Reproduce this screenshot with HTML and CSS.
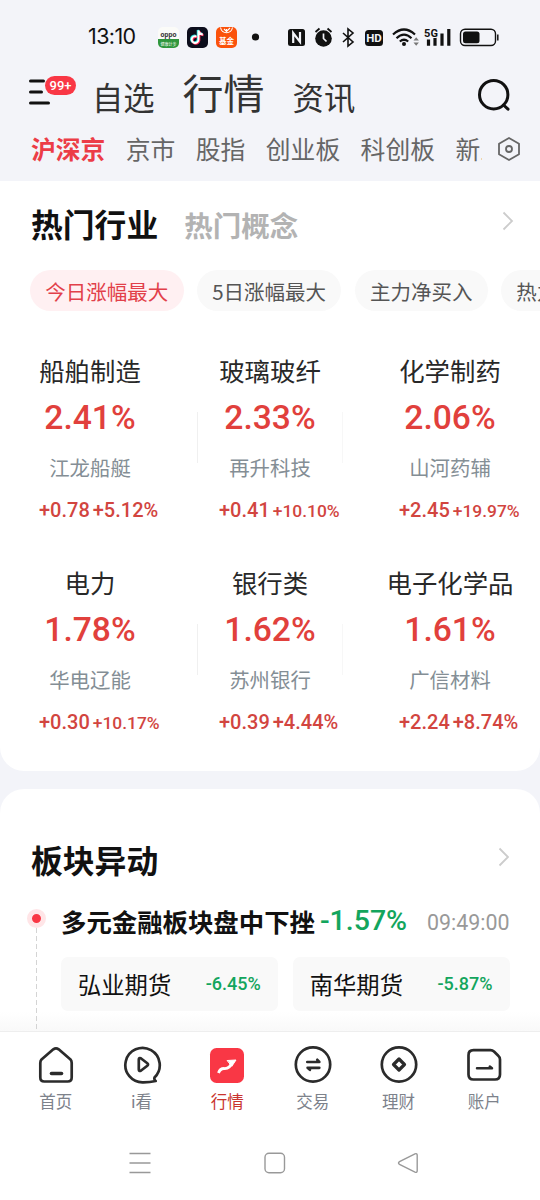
FILE: index.html
```html
<!DOCTYPE html>
<html lang="zh-CN">
  <head>
    <meta charset="UTF-8" />
    <meta name="viewport" content="width=device-width, initial-scale=1.0" />
    <title>行情</title>
    <link rel="stylesheet" href="styles.css">
  </head>
  <body>
    <div class="phone">
      <div class="status">
        <span class="clock">13:10</span>
        <svg class="status-apps" width="110" height="24" viewBox="0 0 110 24">
          <rect x="2" y="2" width="21" height="21" rx="5" fill="#fbfbf8" />
          <path d="M2 14h21v4a5 5 0 0 1-5 5H7a5 5 0 0 1-5-5z" fill="#2f963d" />
          <text x="12.5" y="12" class="t-oppo">oppo</text>
          <text x="12.5" y="20.5" class="t-tiny">健康计步</text>
          <rect x="31" y="2" width="21" height="21" rx="5" fill="#0c0d1c" />
          <g fill="none" stroke-width="2.3">
            <path d="M40.5 11.5a3.4 3.4 0 1 0 2 3.3V5.5c.4 2.4 1.9 3.7 4.3 4" stroke="#25e5e0" transform="translate(-.6 -.5)" />
            <path d="M40.5 11.5a3.4 3.4 0 1 0 2 3.3V5.5c.4 2.4 1.9 3.7 4.3 4" stroke="#fe2c55" transform="translate(.7 .6)" />
            <path d="M40.5 11.5a3.4 3.4 0 1 0 2 3.3V5.5c.4 2.4 1.9 3.7 4.3 4" stroke="#fff" stroke-width="1.9" />
          </g>
          <rect x="60" y="2" width="21" height="21" rx="5" fill="#fb520b" />
          <path d="M64.5 2.5c1.5 7 10.5 7 12 0M68 4l2.5 2.5L74 3M70.5 6.5V4" fill="none" stroke="#fff" stroke-width="1.1" />
          <text x="70.5" y="18.5" class="t-fund">基金</text>
          <circle cx="99.5" cy="12" r="3.6" fill="#111" />
        </svg>
        <svg class="status-sys" width="214" height="24" viewBox="0 0 214 24">
          <rect x="2" y="4" width="17" height="17" rx="2.5" fill="#111" />
          <path d="M7.2 18V8l6.800 8.800V7" fill="none" stroke="#f3f4f9" stroke-width="2.2" />
          <circle cx="37.5" cy="13.5" r="8.3" fill="#111" />
          <path d="M29.5 7l4-3.500M45.5 7l-4-3.500" stroke="#111" stroke-width="1.8" />
          <path d="M37.5 8.500v5l3 3" fill="none" stroke="#f3f4f9" stroke-width="1.7" />
          <path d="M57 8l10 9-5 4V4l5 4-10 9" fill="none" stroke="#111" stroke-width="1.6" />
          <rect x="79" y="5" width="18" height="16" rx="3.5" fill="#111" />
          <text x="88" y="17.3" class="t-hd">HD</text>
          <g fill="none" stroke="#111" stroke-width="2.2">
            <path d="M107 9.500q11-10 22 0" />
            <path d="M110.500 13.200q7.500-7 15 0" />
            <path d="M113.800 16.500q4.200-3.500 8.400 0" />
          </g>
          <circle cx="118" cy="19" r="2" fill="#111" />
          <path d="M127.500 15.500l2.700-3.200 2.700 3.200zM127.500 17.500l2.700 3.200 2.700-3.200z" fill="#777" />
          <path d="M142.500 20.800v-6.300M149 20.800v-8.300M156 20.800V8.500M162.800 20.800V4" stroke="#111" stroke-width="3.200" />
          <text x="145" y="11.500" class="t-5g">5G</text>
          <rect x="174.500" y="4.200" width="35" height="16.300" rx="4.500" fill="none" stroke="#111" stroke-width="1.400" />
          <rect x="177" y="6.500" width="16.500" height="11.800" rx="2.500" fill="#111" />
          <path d="M211.800 9.500v6" stroke="#111" stroke-width="1.500" />
        </svg>
      </div>

      <header class="top-nav">
        <div class="menu">
          <svg width="24" height="30" viewBox="0 0 24 30" stroke="#111" stroke-width="3" stroke-linecap="round">
            <path d="M2.500 4h13M2.500 15h11M2.500 26h18" />
          </svg>
          <span class="badge">99+</span>
        </div>
        <span class="nav-item">自选</span>
        <span class="nav-item active">行情</span>
        <span class="nav-item">资讯</span>
        <svg class="search" width="36" height="36" viewBox="0 0 36 36" fill="none" stroke="#111" stroke-width="3" stroke-linecap="round">
          <circle cx="17.700" cy="17.700" r="14.200" />
          <path d="M27.500 28l4.500 4.200" />
        </svg>
      </header>

      <nav class="market-tabs">
        <div class="tabs">
          <span class="active">沪深京</span>
          <span>京市</span>
          <span>股指</span>
          <span>创业板</span>
          <span>科创板</span>
          <span>新三板</span>
        </div>
        <svg width="24" height="26" viewBox="0 0 24 26" fill="none" stroke="#666" stroke-width="1.800" stroke-linejoin="round">
          <path d="M12 2l10 5.700v10.600L12 24 2 18.300V7.700z" />
          <circle cx="12" cy="13" r="3" />
        </svg>
      </nav>

      <section class="card hot">
        <div class="card-head">
          <h2>热门行业</h2>
          <span class="sub">热门概念</span>
          <svg class="arrow" width="12" height="20" viewBox="0 0 12 20"><path d="M1.500 1.500L10 10l-8.500 8.500" /></svg>
        </div>
        <div class="chips">
          <span class="chip active">今日涨幅最大</span>
          <span class="chip">5日涨幅最大</span>
          <span class="chip">主力净买入</span>
          <span class="chip">热力图</span>
        </div>
        <div class="grid">
          <div class="cell">
            <div class="name">船舶制造</div>
            <div class="rate">2.41%</div>
            <div class="stock">江龙船艇</div>
            <div class="change"><span>+0.78</span><span>+5.12%</span></div>
          </div>
          <div class="cell">
            <div class="name">玻璃玻纤</div>
            <div class="rate">2.33%</div>
            <div class="stock">再升科技</div>
            <div class="change"><span>+0.41</span><span class="small">+10.10%</span></div>
          </div>
          <div class="cell">
            <div class="name">化学制药</div>
            <div class="rate">2.06%</div>
            <div class="stock">山河药辅</div>
            <div class="change"><span>+2.45</span><span class="small">+19.97%</span></div>
          </div>
          <div class="cell">
            <div class="name">电力</div>
            <div class="rate">1.78%</div>
            <div class="stock">华电辽能</div>
            <div class="change"><span>+0.30</span><span class="small">+10.17%</span></div>
          </div>
          <div class="cell">
            <div class="name">银行类</div>
            <div class="rate">1.62%</div>
            <div class="stock">苏州银行</div>
            <div class="change"><span>+0.39</span><span>+4.44%</span></div>
          </div>
          <div class="cell">
            <div class="name">电子化学品</div>
            <div class="rate">1.61%</div>
            <div class="stock">广信材料</div>
            <div class="change"><span>+2.24</span><span>+8.74%</span></div>
          </div>
        </div>
      </section>

      <section class="card moves">
        <div class="card-head">
          <h2>板块异动</h2>
          <svg class="arrow" width="12" height="20" viewBox="0 0 12 20"><path d="M1.500 1.500L10 10l-8.500 8.500" /></svg>
        </div>
        <div class="event">
          <div class="timeline">
            <i class="dot"></i>
            <i class="line"></i>
          </div>
          <div class="event-body">
            <div class="event-title">
              <b>多元金融板块盘中下挫</b>
              <span class="fall">-1.57%</span>
              <time>09:49:00</time>
            </div>
            <div class="stocks">
              <div class="stock-box"><span>弘业期货</span><em>-6.45%</em></div>
              <div class="stock-box"><span>南华期货</span><em>-5.87%</em></div>
            </div>
          </div>
        </div>
      </section>

      <footer class="tab-bar">
        <div class="tab">
          <svg width="40" height="40" viewBox="0 0 40 40">
            <path d="M5.500 14.500L17.300 4.300q2.700-2 5.400 0L34.500 14.500q1.200 1.300 1.200 3.500v14.500q0 4-4 4H8.300q-4 0-4-4V18q0-2.200 1.200-3.500z" />
            <path d="M15.500 28.500h10" stroke-width="3.600" />
          </svg>
          <span>首页</span>
        </div>
        <div class="tab">
          <svg width="40" height="40" viewBox="0 0 40 40">
            <path d="M32.500 32.500A17.200 17.200 0 1 0 21.500 37.300q6.500 0 12.200-1.300-1.800-1.200-1.200-3.500z" />
            <path d="M16.800 14.500q0-2 2-1.200l6.500 5q1.500 1.200 0 2.400l-6.500 5q-2 .8-2-1.200z" />
          </svg>
          <span>i看</span>
        </div>
        <div class="tab active">
          <svg width="40" height="40" viewBox="0 0 40 40">
            <rect x="3" y="3" width="34" height="35" rx="6.500" fill="#f93745" stroke="none" />
            <path d="M11.500 28q1.500-4.500 5.500-4.500 6 .5 8-6.500" stroke="#fff" stroke-width="2.800" stroke-linecap="butt" />
            <path d="M20.500 15.500l8.500-.5-4 6z" fill="#fff" stroke="#fff" stroke-width="1" />
          </svg>
          <span>行情</span>
        </div>
        <div class="tab">
          <svg width="40" height="40" viewBox="0 0 40 40">
            <circle cx="20" cy="19.500" r="17.200" />
            <path d="M14.300 17h12l-2-2.200M26.300 22.800H14.600l2.300 2" />
          </svg>
          <span>交易</span>
        </div>
        <div class="tab">
          <svg width="40" height="40" viewBox="0 0 40 40">
            <circle cx="20" cy="19.500" r="17.200" />
            <path d="M20 14l5.500 5.500-5.500 5.500-5.500-5.500z" stroke-width="3.200" />
          </svg>
          <span>理财</span>
        </div>
        <div class="tab">
          <svg width="40" height="40" viewBox="0 0 40 40">
            <path d="M9.500 5.200h17q2 0 3.500 1.300l4.300 4.300q1.700 1.500 1.700 3.700v15q0 5-5 5H9.500q-5 0-5-5V10.200q0-5 5-5z" />
            <path d="M13 23.300h15l-2.200-1.700" stroke-width="2.500" />
          </svg>
          <span>账户</span>
        </div>
      </footer>

      <div class="sys-nav">
        <svg width="24" height="24" viewBox="0 0 24 24"><path d="M1.500 2.500h21M1.500 12h21M1.500 21.500h21" /></svg>
        <svg width="24" height="24" viewBox="0 0 24 24"><rect x="3" y="2.300" width="19.500" height="19.500" rx="4" /></svg>
        <svg width="24" height="24" viewBox="0 0 24 24"><path d="M20 2.800L4.500 10.600q-2 1.400 0 2.800L20 21.200q2.200.7 2.200-1.500V4.300q0-2.200-2.200-1.500z" /></svg>
      </div>
    </div>
  </body>
</html>
```

FILE: styles.css
```css
* {
  box-sizing: border-box;
}
body {
  margin: 0;
  background: #f3f4f9;
  color: #111;
  font-family: "Noto Sans CJK SC", sans-serif;
}
.phone {
  width: 540px;
  height: 1200px;
  overflow: hidden;
  display: flex;
  flex-direction: column;
}
h2 {
  margin: 0;
}

/* status bar */
.status {
  display: flex;
  align-items: center;
  height: 73px;
  padding-left: 88px;
  flex: none;
}
.clock {
  width: 68px;
  font: 400 21.5px/30px Inter, sans-serif;
  letter-spacing: -0.6px;
  color: #111;
  margin-top: -2px;
}
.status-sys {
  margin-left: 20px;
}
.status svg text {
  text-anchor: middle;
  font-family: Roboto, "Noto Sans CJK SC", sans-serif;
}
.t-oppo {
  font-size: 7px;
  font-weight: 700;
  fill: #333;
}
.t-tiny {
  font-size: 4px;
  fill: #fff;
}
.t-fund {
  font-size: 7.5px;
  font-weight: 700;
  fill: #fff;
}
.t-hd {
  font-size: 11.5px;
  font-weight: 700;
  fill: #f3f4f9;
}
.t-5g {
  font-size: 11px;
  font-weight: 700;
  fill: #111;
  stroke: #f3f4f9;
  stroke-width: 2px;
  paint-order: stroke;
}

/* top navigation */
.top-nav {
  display: flex;
  align-items: center;
  height: 44px;
  flex: none;
  padding: 0 28px 0 28px;
}
.menu {
  position: relative;
  width: 64px;
  height: 30px;
  margin-top: -6px;
}
.badge {
  position: absolute;
  left: 17px;
  top: -1px;
  width: 31px;
  height: 19px;
  border-radius: 10px;
  background: #f93745;
  color: #fff;
  font: 500 13px/19px Roboto, sans-serif;
  text-align: center;
}
.nav-item {
  margin: 4px 28px 0 0;
  font-size: 31.3px;
  line-height: 40px;
  color: #333;
}
.nav-item.active {
  margin-top: -8px;
  font-size: 41px;
}
.search {
  margin-left: auto;
}

/* market tabs */
.market-tabs {
  display: flex;
  align-items: center;
  height: 64px;
  flex: none;
  padding: 0 19px 0 31px;
}
.tabs {
  display: flex;
  gap: 20.4px;
  width: 451px;
  margin-top: -2px;
  overflow: hidden;
  white-space: nowrap;
  font-size: 24.8px;
  color: #666;
}
.tabs .active {
  color: #ec3d47;
  font-weight: 700;
}
.market-tabs svg {
  margin-left: auto;
  margin-top: -1px;
}

/* cards */
.card {
  background: #fff;
  flex: none;
}
.hot {
  height: 590px;
  border-radius: 0 0 24px 24px;
}
.card-head {
  display: flex;
  align-items: center;
  height: 86px;
  padding: 0 26px 0 31px;
}
.card-head h2 {
  margin-top: -2px;
  font-size: 31.8px;
  font-weight: 700;
}
.card-head .sub {
  margin: 1px 0 0 26px;
  font-size: 28.5px;
  font-weight: 700;
  color: #b3b3b3;
}
.arrow {
  margin: -6px 0 0 auto;
  fill: none;
  stroke: #ccc;
  stroke-width: 1.8;
}
.chips {
  display: flex;
  gap: 13.3px;
  margin-top: 3px;
  padding-left: 30px;
  overflow: hidden;
}
.chip {
  flex: none;
  height: 41px;
  padding: 0 15.3px;
  border-radius: 21px;
  background: #f9f9f9;
  color: #555;
  font-size: 20.5px;
  line-height: 42px;
}
.chip.active {
  background: #fff0f2;
  color: #e2404a;
}

/* industry grid */
.grid {
  display: grid;
  grid-template-columns: repeat(3, 180px);
  row-gap: 33.5px;
  margin-top: 39px;
}
.cell {
  height: 178px;
  text-align: center;
}
.cell:nth-child(3n + 2) {
  background: linear-gradient(#f0f0f0, #f0f0f0) no-repeat 17px 62px / 1px 51px,
    linear-gradient(#f7f7f7, #f7f7f7) no-repeat 162px 62px / 1px 51px;
}
.name {
  font-size: 25.4px;
  line-height: 40px;
  color: #282828;
}
.rate {
  font: 500 33.6px/56px Roboto, sans-serif;
  height: 54px;
  color: #e1403c;
}
.stock {
  font-size: 20.4px;
  line-height: 46px;
  color: #848e95;
}
.change {
  display: flex;
  align-items: baseline;
  gap: 3px;
  padding-left: 39px;
  font: 500 20px/40px Roboto, sans-serif;
  color: #d2453f;
  white-space: nowrap;
}
.change .small {
  font-size: 17.4px;
}

/* sector moves */
.moves {
  height: 242px;
  margin-top: 18px;
  border-radius: 24px 24px 0 0;
  overflow: hidden;
  background: linear-gradient(#fff 92%, #f9f9f9);
}
.moves .card-head {
  height: 108px;
  padding: 33px 30px 0 31px;
}
.event {
  display: flex;
  height: 134px;
  padding-left: 27px;
}
.timeline {
  width: 34px;
  padding-top: 12px;
}
.dot {
  display: block;
  width: 19px;
  height: 19px;
  border: 5px solid #ffe5e7;
  border-radius: 50%;
  background: #f93745;
}
.line {
  display: block;
  width: 1px;
  height: 103px;
  margin-left: 9px;
  background: repeating-linear-gradient(#d4d4d4 0 5px, transparent 5px 8px);
}
.event-body {
  width: 448.5px;
}
.event-title {
  display: flex;
  align-items: center;
  height: 48px;
  white-space: nowrap;
}
.event-title b {
  font-size: 25.4px;
}
.fall {
  margin-left: 5px;
  font: 500 28.5px/40px Roboto, sans-serif;
  color: #13a55d;
}
.event-title time {
  margin: 4px 0 0 auto;
  font: 400 21.4px/40px Roboto, sans-serif;
  color: #999;
}
.stocks {
  display: flex;
  gap: 15px;
  margin-top: 11.5px;
}
.stock-box {
  display: flex;
  align-items: center;
  justify-content: space-between;
  flex: 1;
  height: 54px;
  padding: 0 17px;
  border-radius: 7px;
  background: #f9f9f9;
}
.stock-box span {
  font-size: 23.3px;
}
.stock-box em {
  font: 500 18px/30px Roboto, sans-serif;
  color: #13a55d;
}

/* bottom bar */
.tab-bar {
  display: flex;
  flex: none;
  height: 94px;
  padding: 13px 13px 0;
  background: #fff;
  border-top: 1px solid #eee;
}
.tab {
  flex: 1;
  display: flex;
  flex-direction: column;
  align-items: center;
  font-size: 16.5px;
  line-height: 33px;
  color: #7d828b;
}
.tab.active {
  color: #c9342e;
}
.tab svg {
  flex: none;
  fill: none;
  stroke: #2b2b2b;
  stroke-width: 2.7;
  stroke-linecap: round;
  stroke-linejoin: round;
}
.sys-nav {
  display: flex;
  flex: 1;
  gap: 109.5px;
  padding: 26px 0 0 128px;
  background: #fff;
}
.sys-nav svg {
  fill: none;
  stroke: #999;
  stroke-width: 1.4;
}
```
